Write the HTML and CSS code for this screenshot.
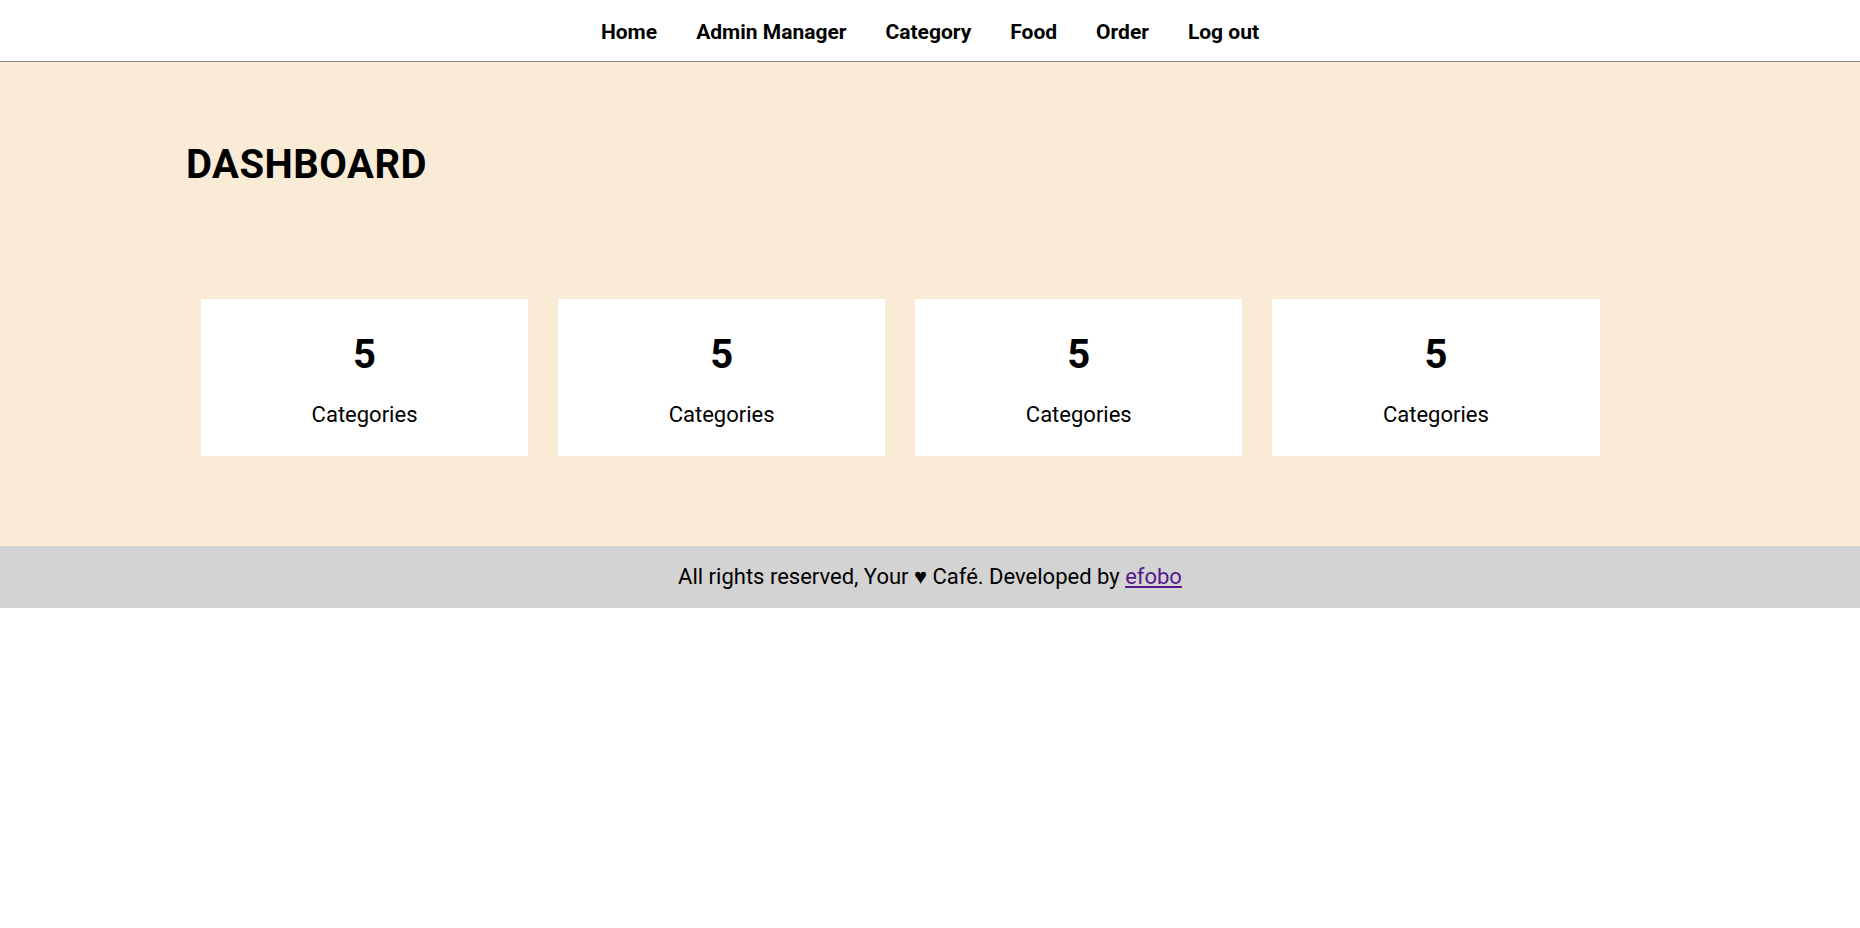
FILE: index.html
```html
<!DOCTYPE html>
<html lang="en">
<head>
<meta charset="utf-8">
<title>Dashboard</title>
<link rel="stylesheet" href="styles.css">
</head>
<body>
<header class="menu">
  <nav class="nav">
    <a href="#" class="nav-link">Home</a>
    <a href="#" class="nav-link">Admin Manager</a>
    <a href="#" class="nav-link">Category</a>
    <a href="#" class="nav-link">Food</a>
    <a href="#" class="nav-link">Order</a>
    <a href="#" class="nav-link">Log out</a>
  </nav>
</header>
<main class="main-content">
  <div class="wrapper">
    <h1 class="title">DASHBOARD</h1>
    <div class="cards">
      <div class="card"><div class="card-num">5</div><div class="card-label">Categories</div></div>
      <div class="card"><div class="card-num">5</div><div class="card-label">Categories</div></div>
      <div class="card"><div class="card-num">5</div><div class="card-label">Categories</div></div>
      <div class="card"><div class="card-num">5</div><div class="card-label">Categories</div></div>
    </div>
  </div>
</main>
<footer class="footer">
  <p class="footer-text">All rights reserved, Your &#9829; Café. Developed by <a href="#" class="footer-link">efobo</a></p>
</footer>
</body>
</html>
```
FILE: styles.css
```css
* { box-sizing: border-box; }
body {
  margin: 0;
  font-family: Roboto, "Liberation Sans", sans-serif;
  color: #000;
  background: #fff;
}
.menu {
  height: 62px;
  padding-top: 2px;
  border-bottom: 1px solid #8a8a8a;
  display: flex;
  align-items: center;
  justify-content: center;
}
.nav {
  display: flex;
  gap: 39px;
}
.nav-link {
  font-size: 21px;
  font-weight: 700;
  color: #000;
  text-decoration: none;
}
.main-content {
  background: #faebd7;
  padding: 79px 0 90px;
}
.wrapper {
  width: 80%;
  margin: 0 auto;
}
.title {
  margin: 0;
  font-size: 40px;
  line-height: 48px;
  font-weight: 700;
  letter-spacing: 0.5px;
}
.cards {
  display: flex;
  margin-top: 110px;
}
.card {
  width: 22%;
  margin: 0 1%;
  height: 157px;
  background: #fff;
  text-align: center;
  padding-top: 32px;
}
.card-num {
  font-size: 40px;
  line-height: 48px;
  font-weight: 700;
}
.card-label {
  margin-top: 24px;
  font-size: 22px;
  line-height: 24px;
}
.footer {
  background: #d3d3d3;
  height: 62px;
  display: flex;
  align-items: center;
  justify-content: center;
}
.footer-text {
  margin: 0;
  font-size: 22px;
}
.footer-link {
  color: #551a8b;
}
```
